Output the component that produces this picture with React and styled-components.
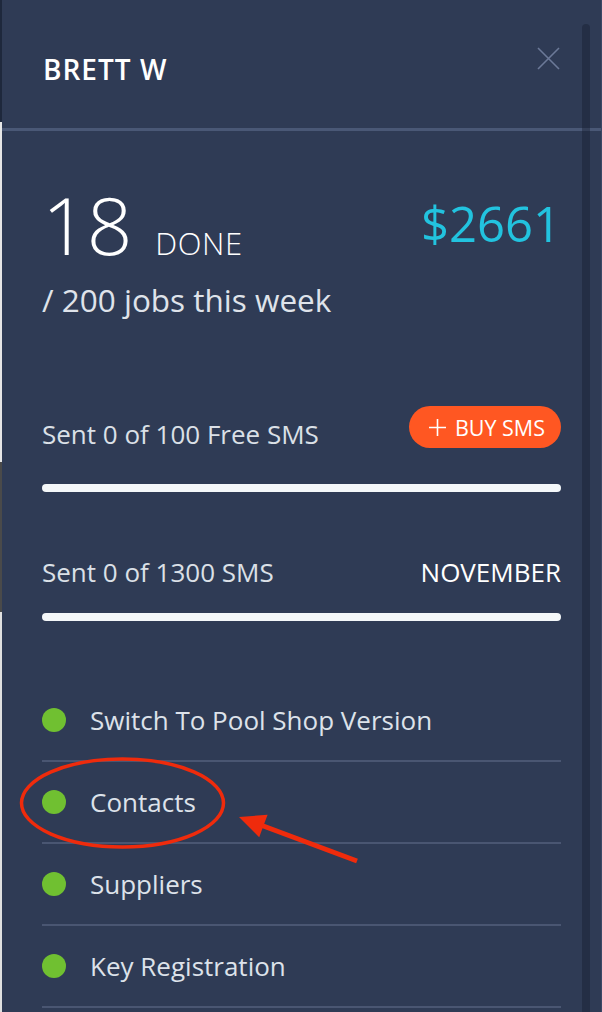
import React from 'react'
import styled, { createGlobalStyle } from 'styled-components'

const GlobalStyle = createGlobalStyle`
  html, body {
    margin: 0;
    padding: 0;
    background: #2f3b55;
  }
  body {
    font-family: "Open Sans", "Liberation Sans", sans-serif;
    -webkit-font-smoothing: antialiased;
  }
`;

const Page = styled.div`
  position: relative;
  display: flex;
  width: 602px;
  height: 1012px;
  overflow: hidden;
`;

const Backdrop = styled.div`
  flex: 0 0 2px;
  background: linear-gradient(
    to bottom,
    #1e283c 0px,
    #1e283c 122px,
    #e6e6e6 122px,
    #e6e6e6 462px,
    #4a4a4a 462px,
    #4a4a4a 612px,
    #e0e0e0 612px
  );
`;

const Drawer = styled.div`
  flex: 1;
  background: #2f3b55;
  color: #fff;
  border-right: 1px solid #3b4866;
`;

const Header = styled.div`
  display: flex;
  justify-content: space-between;
  align-items: flex-start;
  height: 131px;
  padding: 47px 41px 0 41px;
  box-sizing: border-box;
  border-bottom: 3px solid #4a5876;
`;

const Name = styled.div`
  font-size: 28px;
  font-weight: 600;
  letter-spacing: 1px;
  line-height: 40px;
  margin-top: 2px;
  color: #fff;
`;

const CloseButton = styled.button`
  width: 23px;
  height: 23px;
  padding: 0;
  border: 0;
  background: none;
  color: #6c7998;
  cursor: pointer;
`;

const Body = styled.div`
  padding: 0 40px 0 40px;
`;

const StatsRow = styled.div`
  display: flex;
  justify-content: space-between;
  align-items: flex-start;
  margin-top: 53px;
`;

const Done = styled.div`
  display: flex;
  align-items: baseline;
  gap: 24px;
`;

const BigNumber = styled.span`
  font-size: 80px;
  font-weight: 300;
  line-height: 80px;
  letter-spacing: -1px;
`;

const DoneLabel = styled.span`
  font-size: 31px;
  font-weight: 300;
  letter-spacing: 0.6px;
`;

const Earnings = styled.div`
  margin-top: 15px;
  font-size: 49px;
  line-height: 48px;
  color: #22c3df;
`;

const Week = styled.div`
  margin-top: 19px;
  font-size: 31.5px;
  line-height: 34px;
  color: #dfe3ea;
`;

const SmsRow = styled.div`
  display: flex;
  justify-content: space-between;
  align-items: flex-end;
  margin-top: ${p => p.$top}px;
`;

const SmsText = styled.span`
  font-size: 26px;
  line-height: 26px;
  color: #dbe0e7;
`;

const Month = styled.span`
  font-size: 26px;
  line-height: 26px;
  color: #fff;
`;

const BuyButton = styled.button`
  display: flex;
  align-items: center;
  gap: 9px;
  height: 42px;
  margin-bottom: -1px;
  padding: 0 16px 0 20px;
  border: 0;
  border-radius: 21px;
  background: #ff5722;
  color: #fff;
  font-family: inherit;
  font-size: 21.5px;
  cursor: pointer;
`;

const Bar = styled.div`
  height: 8px;
  margin-top: ${p => p.$top}px;
  border-radius: 4px;
  background: #f4f7f9;
`;

const Menu = styled.ul`
  list-style: none;
  margin: 59px 0 0 0;
  padding: 0;
`;

const MenuItem = styled.li`
  display: flex;
  align-items: center;
  gap: 24px;
  height: 80px;
  border-bottom: 2px solid #4a5672;
  font-size: 26px;
  color: #dde2ea;
`;

const Dot = styled.span`
  flex: 0 0 24px;
  width: 24px;
  height: 24px;
  border-radius: 50%;
  background: #70c031;
`;

const Scrollbar = styled.div`
  position: absolute;
  top: 24px;
  bottom: -10px;
  left: 582px;
  width: 8px;
  border-radius: 4px;
  background: rgba(20, 28, 44, 0.4);
`;

const Annotation = styled.svg`
  position: absolute;
  inset: 0;
  pointer-events: none;
`;

const menu = ['Switch To Pool Shop Version', 'Contacts', 'Suppliers', 'Key Registration']

const App = () => {
  return (
    <Page>
      <GlobalStyle />
      <Backdrop />
      <Drawer>
        <Header>
          <Name>BRETT W</Name>
          <CloseButton aria-label="Close">
            <svg width="23" height="23" viewBox="0 0 23 23">
              <path d="M1 1 L22 22 M22 1 L1 22" stroke="currentColor" strokeWidth="1.6" fill="none" />
            </svg>
          </CloseButton>
        </Header>
        <Body>
          <StatsRow>
            <Done>
              <BigNumber>18</BigNumber>
              <DoneLabel>DONE</DoneLabel>
            </Done>
            <Earnings>$2661</Earnings>
          </StatsRow>
          <Week>/ 200 jobs this week</Week>

          <SmsRow $top={89}>
            <SmsText>Sent 0 of 100 Free SMS</SmsText>
            <BuyButton>
              <svg width="17" height="17" viewBox="0 0 17 17">
                <path d="M8.5 0 V17 M0 8.5 H17" stroke="#fff" strokeWidth="1.6" />
              </svg>
              BUY SMS
            </BuyButton>
          </SmsRow>
          <Bar $top={37} />

          <SmsRow $top={67}>
            <SmsText>Sent 0 of 1300 SMS</SmsText>
            <Month>NOVEMBER</Month>
          </SmsRow>
          <Bar $top={28} />

          <Menu>
            {menu.map(label => (
              <MenuItem key={label}>
                <Dot />
                {label}
              </MenuItem>
            ))}
          </Menu>
        </Body>
      </Drawer>
      <Scrollbar />
      <Annotation width="602" height="1012" viewBox="0 0 602 1012">
        <ellipse cx="122.5" cy="803" rx="101" ry="44" fill="none" stroke="#ef2b0c" strokeWidth="3.5" />
        <line x1="357" y1="861" x2="258" y2="824" stroke="#ef2b0c" strokeWidth="5" />
        <polygon points="239,817 267.6,814.8 259.2,837.2" fill="#ef2b0c" />
      </Annotation>
    </Page>
  )
}

export default App
